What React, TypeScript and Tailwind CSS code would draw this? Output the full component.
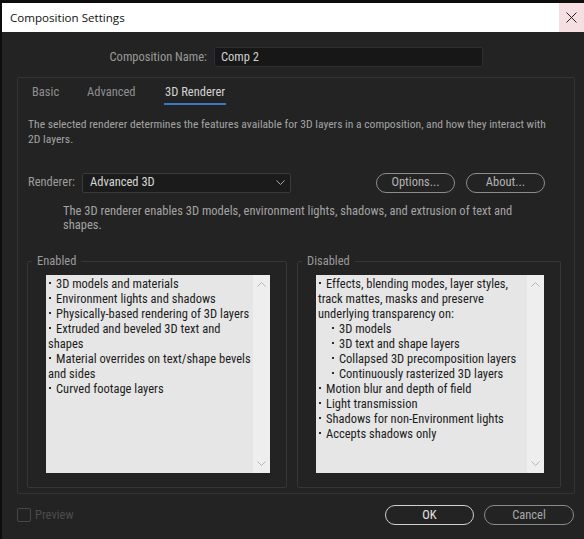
import React from "react";

function Chevron({ up = false }: { up?: boolean }) {
  return (
    <svg width="9" height="6" viewBox="0 0 9 6" className="block">
      <path d={up ? "M0.5 5.5 L4.5 1.5 L8.5 5.5" : "M0.5 0.5 L4.5 4.5 L8.5 0.5"} fill="none" stroke="#b5b5b5" strokeWidth="1" />
    </svg>
  );
}

type Line = { t: string; indent?: boolean; bullet?: boolean };

function ListBox({ lines, width }: { lines: Line[]; width: string }) {
  return (
    <div className={`flex h-[198px] bg-[#e6e6e6] ${width}`}>
      <div className="flex-1 pl-[2px] pt-[1px] text-[12.5px] leading-[15px] text-[#1c1c1c]">
        {lines.map((l, i) => (
          <div key={i} className={`flex items-center whitespace-nowrap ${l.indent ? "pl-[13px]" : ""}`}>
            {l.bullet ? <span className="ml-[1px] mr-[5px] inline-block h-[2px] w-[2px] bg-[#2a2a2a]" /> : null}
            <span>{l.t}</span>
          </div>
        ))}
      </div>
      <div className="flex w-[17px] flex-col items-center justify-between bg-[#eeeeee] pt-[6px] pb-[6px]">
        <Chevron up />
        <Chevron />
      </div>
    </div>
  );
}

const enabled: Line[] = [
  { t: "3D models and materials", bullet: true },
  { t: "Environment lights and shadows", bullet: true },
  { t: "Physically-based rendering of 3D layers", bullet: true },
  { t: "Extruded and beveled 3D text and", bullet: true },
  { t: "shapes" },
  { t: "Material overrides on text/shape bevels", bullet: true },
  { t: "and sides" },
  { t: "Curved footage layers", bullet: true },
];

const disabled: Line[] = [
  { t: "Effects, blending modes, layer styles,", bullet: true },
  { t: "track mattes, masks and preserve" },
  { t: "underlying transparency on:" },
  { t: "3D models", bullet: true, indent: true },
  { t: "3D text and shape layers", bullet: true, indent: true },
  { t: "Collapsed 3D precomposition layers", bullet: true, indent: true },
  { t: "Continuously rasterized 3D layers", bullet: true, indent: true },
  { t: "Motion blur and depth of field", bullet: true },
  { t: "Light transmission", bullet: true },
  { t: "Shadows for non-Environment lights", bullet: true },
  { t: "Accepts shadows only", bullet: true },
];

export default function App() {
  return (
    <div className="flex h-[539px] w-[584px] flex-col overflow-hidden bg-[#0d0d0d] pl-[2px] pt-[3px] font-['Roboto',sans-serif] font-stretch-condensed">
      {/* Title bar */}
      <div className="flex h-[29px] shrink-0 items-center justify-between bg-white">
        <span className="pl-[8px] font-['Open_Sans',sans-serif] text-[11.6px] text-[#111] font-stretch-normal">Composition Settings</span>
        <div className="flex h-full w-[25px] items-center justify-center bg-[#f5dfe2]">
          <svg width="11" height="11" viewBox="0 0 11 11">
            <path d="M0.5 0.5 L10.5 10.5 M10.5 0.5 L0.5 10.5" stroke="#222" strokeWidth="1" />
          </svg>
        </div>
      </div>

      {/* Body */}
      <div className="flex flex-1 flex-col bg-[#232323] text-[12px]">
        {/* Composition name */}
        <div className="mt-[15px] flex items-center">
          <span className="w-[205px] text-right text-[12.5px] text-[#9a9a9a]">Composition Name:</span>
          <div className="ml-[7px] flex h-[20px] w-[269px] items-center rounded-[2px] border border-[#2e2e2e] bg-[#171717] pl-[6px] text-[12.5px] text-[#cfcfcf]">
            Comp 2
          </div>
        </div>

        {/* Tab panel */}
        <div className="ml-[15px] mt-[10px] flex h-[417px] w-[558px] flex-col rounded-[2px] border border-[#333333]">
          {/* tabs */}
          <div className="flex pl-[14px] pt-[5px] text-[12.5px]">
            <div className="w-[55px] text-[#8f8f8f]">Basic</div>
            <div className="w-[77px] text-[#8f8f8f]">Advanced</div>
            <div className="border-b-2 border-[#3a78c2] px-[1px] pb-[1px] text-[#d2d2d2]">3D Renderer</div>
          </div>

          <div className="mt-[12px] pl-[10px] text-[11.6px] leading-[15px] text-[#a3a3a3]">
            The selected renderer determines the features available for 3D layers in a composition, and how they interact with
            <br />
            2D layers.
          </div>

          {/* renderer row */}
          <div className="mt-[26px] flex items-center pl-[10px]">
            <span className="w-[54px] text-[12.5px] text-[#9d9d9d]">Renderer:</span>
            <div className="flex h-[20px] w-[209px] items-center justify-between rounded-[2px] border border-[#3a3a3a] bg-[#1b1b1b] pl-[7px] pr-[5px] text-[12.5px] text-[#d6d6d6]">
              <span>Advanced 3D</span>
              <svg width="9" height="6" viewBox="0 0 9 6">
                <path d="M0.5 0.5 L4.5 4.5 L8.5 0.5" fill="none" stroke="#aaaaaa" strokeWidth="1" />
              </svg>
            </div>
            <div className="ml-[85px] flex h-[20px] w-[79px] items-center justify-center rounded-full border border-[#8c8c8c] text-[12.5px] text-[#b3b3b3]">
              Options...
            </div>
            <div className="ml-[11px] flex h-[20px] w-[79px] items-center justify-center rounded-full border border-[#8c8c8c] text-[12.5px] text-[#b3b3b3]">
              About...
            </div>
          </div>

          <div className="mt-[11px] pl-[45px] text-[12.5px] leading-[14px] text-[#a3a3a3]">
            The 3D renderer enables 3D models, environment lights, shadows, and extrusion of text and
            <br />
            shapes.
          </div>

          {/* groups */}
          <div className="mt-[20px] flex gap-[10px] pl-[9px]">
            <fieldset className="h-[236px] w-[260px] rounded-[2px] border border-[#363636]">
              <legend className="ml-[4px] px-[5px] text-[12.5px] text-[#9a9a9a]">Enabled</legend>
              <div className="mt-[4px] pl-[18px]">
                <ListBox lines={enabled} width="w-[224px]" />
              </div>
            </fieldset>
            <fieldset className="h-[236px] w-[264px] rounded-[2px] border border-[#363636]">
              <legend className="ml-[4px] px-[5px] text-[12.5px] text-[#9a9a9a]">Disabled</legend>
              <div className="mt-[4px] pl-[18px]">
                <ListBox lines={disabled} width="w-[228px]" />
              </div>
            </fieldset>
          </div>
        </div>

        {/* bottom row */}
        <div className="mt-[11px] flex items-center pl-[15px] pr-[10px]">
          <div className="h-[14px] w-[14px] rounded-[2px] border border-[#474747]" />
          <span className="ml-[4px] text-[12.5px] text-[#4c4c4c]">Preview</span>
          <div className="ml-auto flex h-[20px] w-[89px] items-center justify-center rounded-full border border-[#d0d0d0] text-[12.5px] text-[#e6e6e6]">
            OK
          </div>
          <div className="ml-[10px] flex h-[20px] w-[90px] items-center justify-center rounded-full border border-[#8a8a8a] text-[12.5px] text-[#a8a8a8]">
            Cancel
          </div>
        </div>
      </div>
    </div>
  );
}
